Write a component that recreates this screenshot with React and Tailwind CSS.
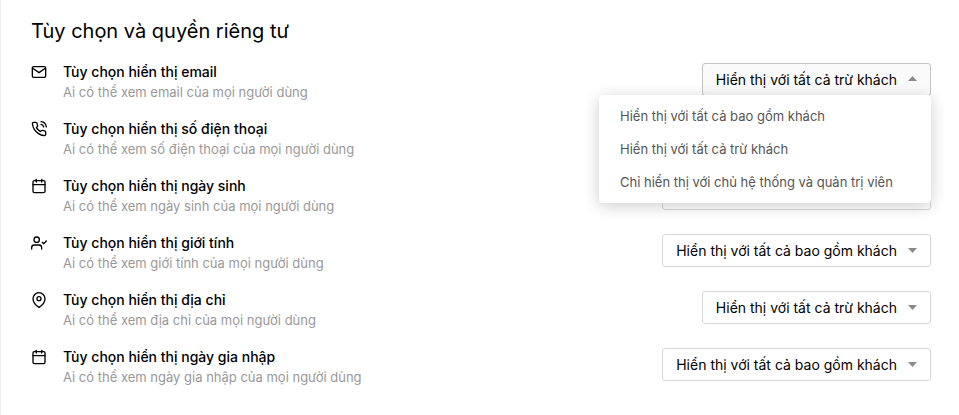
import { useState } from "react";
import { FiCalendar, FiMail, FiMapPin, FiPhoneCall, FiUserCheck } from "react-icons/fi";

const EVERYONE = "Hiển thị với tất cả bao gồm khách";
const MEMBERS = "Hiển thị với tất cả trừ khách";
const OWNERS = "Chỉ hiển thị với chủ hệ thống và quản trị viên";
const CHOICES = [EVERYONE, MEMBERS, OWNERS];

const SETTINGS = [
  { id: "email", icon: FiMail, title: "Tùy chọn hiển thị email", hint: "Ai có thể xem email của mọi người dùng", initial: MEMBERS },
  { id: "phone", icon: FiPhoneCall, title: "Tùy chọn hiển thị số điện thoại", hint: "Ai có thể xem số điện thoại của mọi người dùng", initial: MEMBERS },
  { id: "birthday", icon: FiCalendar, title: "Tùy chọn hiển thị ngày sinh", hint: "Ai có thể xem ngày sinh của mọi người dùng", initial: EVERYONE },
  { id: "gender", icon: FiUserCheck, title: "Tùy chọn hiển thị giới tính", hint: "Ai có thể xem giới tính của mọi người dùng", initial: EVERYONE },
  { id: "address", icon: FiMapPin, title: "Tùy chọn hiển thị địa chỉ", hint: "Ai có thể xem địa chỉ của mọi người dùng", initial: MEMBERS },
  { id: "joined", icon: FiCalendar, title: "Tùy chọn hiển thị ngày gia nhập", hint: "Ai có thể xem ngày gia nhập của mọi người dùng", initial: EVERYONE },
];

function Caret({ up }) {
  return (
    <svg
      viewBox="0 0 9 5"
      aria-hidden="true"
      className={`pointer-events-none absolute right-3.5 h-[5px] w-[9px] fill-[#8a8a8a] ${
        up ? "top-[13px]" : "top-3.5"
      }`}
    >
      <path d={up ? "M0 5 4.5 0 9 5z" : "M0 0h9L4.5 5z"} />
    </svg>
  );
}

function VisibilitySelect({ id, value, open, onToggle, onChange }) {
  return (
    <div className="relative mt-px shrink-0">
      <select
        id={id}
        value={value}
        onMouseDown={(event) => {
          event.preventDefault();
          onToggle();
        }}
        onChange={(event) => onChange(event.target.value)}
        className={`block h-[33px] cursor-pointer appearance-none rounded-[3px] border pr-[33px] pl-[13px] text-sm text-black [field-sizing:content] ${
          open ? "border-[#c4c4c4] bg-[#fafafa]" : "border-[#d8d8d8] bg-white"
        }`}
      >
        {CHOICES.map((choice) => (
          <option key={choice}>{choice}</option>
        ))}
      </select>
      <Caret up={open} />
      {open && (
        <ul className="absolute top-8 right-0 z-10 w-[332px] rounded-[4px] bg-white pt-[5px] pb-1 shadow-[0_3px_16px_rgba(0,0,0,0.2)]">
          {CHOICES.map((choice) => (
            <li key={choice}>
              <button
                type="button"
                onClick={() => onChange(choice)}
                className="block h-[33px] w-full cursor-pointer px-[21px] text-left text-[13px] whitespace-nowrap text-[#555] hover:bg-gray-50"
              >
                {choice}
              </button>
            </li>
          ))}
        </ul>
      )}
    </div>
  );
}

export default function App() {
  const [openId, setOpenId] = useState("email");
  const [values, setValues] = useState(() =>
    Object.fromEntries(SETTINGS.map((setting) => [setting.id, setting.initial])),
  );

  return (
    <main className="min-h-screen border-l border-[#ececec] bg-white pt-4 pr-7 pb-7 pl-[30px] font-['Inter','Noto_Sans',sans-serif] text-black">
      <h1 className="text-xl leading-[30px]">Tùy chọn và quyền riêng tư</h1>
      <div className="mt-4 flex flex-col gap-[17px]">
        {SETTINGS.map(({ id, icon: Icon, title, hint }) => (
          <div key={id} className="flex h-10 items-start">
            <Icon className="mt-0.5 mr-4 size-4 shrink-0" aria-hidden="true" />
            <div className="min-w-0 flex-1">
              <label htmlFor={id} className="block text-sm leading-5 font-medium">
                {title}
              </label>
              <p className="text-[13px] leading-5 text-[#999]">{hint}</p>
            </div>
            <VisibilitySelect
              id={id}
              value={values[id]}
              open={openId === id}
              onToggle={() => setOpenId(openId === id ? null : id)}
              onChange={(value) => {
                setValues({ ...values, [id]: value });
                setOpenId(null);
              }}
            />
          </div>
        ))}
      </div>
    </main>
  );
}
